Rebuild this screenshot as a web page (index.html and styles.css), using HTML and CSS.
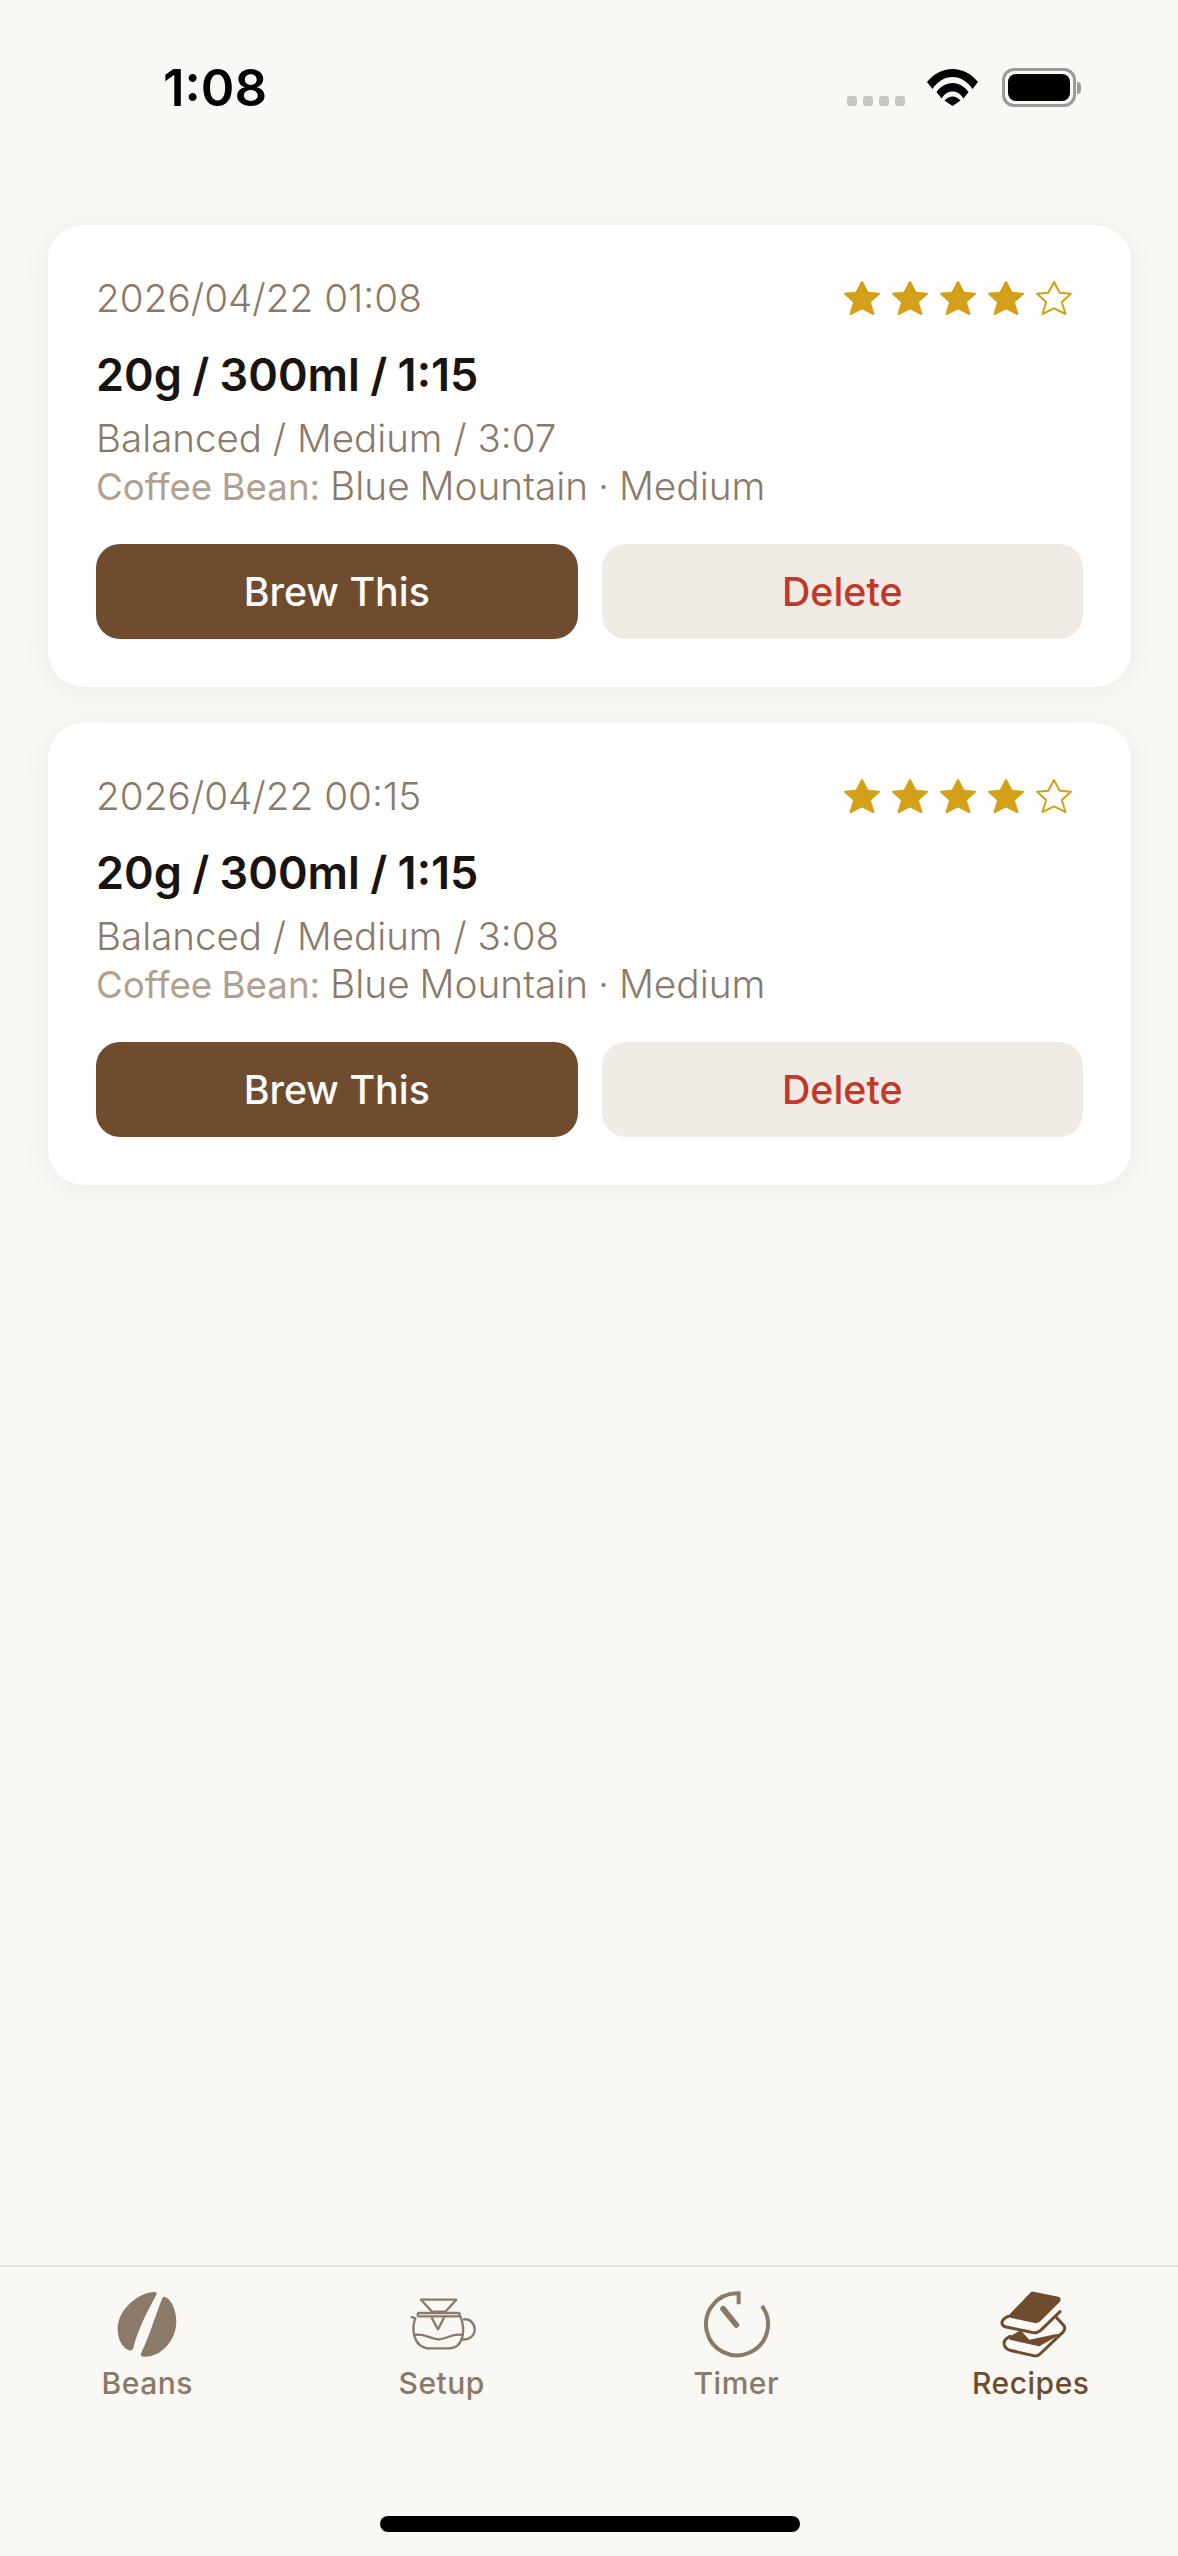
FILE: index.html
```html
<!DOCTYPE html>
<html lang="en">
<head>
<meta charset="utf-8">
<title>Recipes</title>
<link rel="stylesheet" href="styles.css">
</head>
<body>
<div class="page">
  <header class="status">
    <span class="time">1:08</span>
    <div class="status-icons">
      <div class="dots"><i></i><i></i><i></i><i></i></div>
      <svg class="wifi" viewBox="0 0 51 37"><path d="M0 13C6.500 5 15.500 0 25.500 0S44.500 5 51 13L45.500 20C40.500 12.500 33.500 8 25.500 8S10.500 12.500 5.500 20Z"/><path d="M9.500 23C13.500 17.500 19 14 25.500 14S37.500 17.500 41.500 23L36.500 29.500C33.500 25 30 22.500 25.500 22.500S17.500 25 14.500 29.500Z"/><path d="M17.500 31.500C20 29 23 27.500 25.500 27.500S31 29 33.500 31.500L25.500 37Z"/></svg>
      <div class="battery"><div class="battery-body"><div class="battery-fill"></div></div><div class="battery-nub"></div></div>
    </div>
  </header>
  <main class="list">
    <article class="card">
      <div class="card-head">
        <span class="date">2026/04/22 01:08</span>
        <div class="stars">
          <svg class="star" viewBox="0 0 36 34"><path d="M18 1L23.700 11.800 35 12.800 25.800 21 29.500 33 18 27.300 6.500 33 10.200 21 1 12.800 12.300 11.800Z"/></svg>
          <svg class="star" viewBox="0 0 36 34"><path d="M18 1L23.700 11.800 35 12.800 25.800 21 29.500 33 18 27.300 6.500 33 10.200 21 1 12.800 12.300 11.800Z"/></svg>
          <svg class="star" viewBox="0 0 36 34"><path d="M18 1L23.700 11.800 35 12.800 25.800 21 29.500 33 18 27.300 6.500 33 10.200 21 1 12.800 12.300 11.800Z"/></svg>
          <svg class="star" viewBox="0 0 36 34"><path d="M18 1L23.700 11.800 35 12.800 25.800 21 29.500 33 18 27.300 6.500 33 10.200 21 1 12.800 12.300 11.800Z"/></svg>
          <svg class="star star-empty" viewBox="0 0 36 34"><path d="M18 1L23.700 11.800 35 12.800 25.800 21 29.500 33 18 27.300 6.500 33 10.200 21 1 12.800 12.300 11.800Z"/></svg>
        </div>
      </div>
      <h2 class="title">20g / 300ml / 1:15</h2>
      <p class="sub">Balanced / Medium / 3:07</p>
      <p class="bean"><span class="bean-label">Coffee Bean:</span> Blue Mountain · Medium</p>
      <div class="actions">
        <button class="btn btn-primary">Brew This</button>
        <button class="btn btn-delete">Delete</button>
      </div>
    </article>
    <article class="card">
      <div class="card-head">
        <span class="date">2026/04/22 00:15</span>
        <div class="stars">
          <svg class="star" viewBox="0 0 36 34"><path d="M18 1L23.700 11.800 35 12.800 25.800 21 29.500 33 18 27.300 6.500 33 10.200 21 1 12.800 12.300 11.800Z"/></svg>
          <svg class="star" viewBox="0 0 36 34"><path d="M18 1L23.700 11.800 35 12.800 25.800 21 29.500 33 18 27.300 6.500 33 10.200 21 1 12.800 12.300 11.800Z"/></svg>
          <svg class="star" viewBox="0 0 36 34"><path d="M18 1L23.700 11.800 35 12.800 25.800 21 29.500 33 18 27.300 6.500 33 10.200 21 1 12.800 12.300 11.800Z"/></svg>
          <svg class="star" viewBox="0 0 36 34"><path d="M18 1L23.700 11.800 35 12.800 25.800 21 29.500 33 18 27.300 6.500 33 10.200 21 1 12.800 12.300 11.800Z"/></svg>
          <svg class="star star-empty" viewBox="0 0 36 34"><path d="M18 1L23.700 11.800 35 12.800 25.800 21 29.500 33 18 27.300 6.500 33 10.200 21 1 12.800 12.300 11.800Z"/></svg>
        </div>
      </div>
      <h2 class="title">20g / 300ml / 1:15</h2>
      <p class="sub">Balanced / Medium / 3:08</p>
      <p class="bean"><span class="bean-label">Coffee Bean:</span> Blue Mountain · Medium</p>
      <div class="actions">
        <button class="btn btn-primary">Brew This</button>
        <button class="btn btn-delete">Delete</button>
      </div>
    </article>
  </main>
  <nav class="tabbar">
    <div class="tab">
      <svg class="tab-icon" viewBox="0 0 198 198"><path class="solid" d="M122 3C80 3 11 50 11 115C11 150 30 175 46 178C52 180 56 176 58 170C70 120 100 60 127 12C130 6 127 3 122 3Z"/><path class="solid" d="M152 18C172 22 187 60 187 90C187 150 140 198 92 197C82 197 78 192 82 185C105 140 125 70 145 22C147 17 149 16 152 18Z"/></svg>
      <span class="tab-label">Beans</span>
    </div>
    <div class="tab">
      <svg class="tab-icon" viewBox="0 0 198 198"><g class="line"><path d="M36 26H142L109 62H69Z"/><rect x="26" y="66" width="126" height="10" rx="4"/><path d="M69 82L87 115L104 82"/><path d="M8 78L19 82C8 110 10 172 64 172H119C165 172 170 115 154 76"/><path d="M164 85C185 82 197 100 197 115C197 135 180 148 160 145"/><path d="M16 132C44 125 64 145 89 145C114 145 129 125 161 132"/></g></svg>
      <span class="tab-label">Setup</span>
    </div>
    <div class="tab">
      <svg class="tab-icon" viewBox="0 0 198 198"><path class="timer-ring" d="M177 45A93 93 0 1 1 100 7H107V40"/><path class="timer-hand" d="M60 53L100 102"/></svg>
      <span class="tab-label">Timer</span>
    </div>
    <div class="tab tab-active">
      <svg class="tab-icon" viewBox="0 0 198 198"><path class="solid-active" d="M99 3Q103 1 107 2L181 17Q193 21 185 33L127 91Q119 98 110 96L27 78Z"/><path class="line-active" d="M30 76Q10 85 12 97Q14 106 25 108L100 124Q116 128 128 118L186 62"/><path class="line-active" d="M176 80L198 104Q204 114 194 124L126 189Q118 197 106 194L36 178Q18 172 18 156Q19 144 36 136"/><path class="solid-active" d="M36 136L68 118L94 146L172 130L190 128L124 166L34 146Z"/></svg>
      <span class="tab-label">Recipes</span>
    </div>
    <div class="home-indicator"></div>
  </nav>
</div>
</body>
</html>
```
FILE: styles.css
```css
* { box-sizing: border-box; }
html, body { margin: 0; padding: 0; }
body { background: #f9f8f4; font-family: Inter, "Noto Sans", sans-serif; }
.page { display: flex; flex-direction: column; height: 2556px; width: 1178px; }

.status { flex: 0 0 180px; display: flex; justify-content: space-between; align-items: flex-start; padding: 57px 97px 0 163px; }
.time { font-size: 51px; line-height: 61px; font-weight: 600; color: #000; }
.status-icons { display: flex; align-items: flex-end; margin-top: 11px; height: 39px; }
.dots { display: flex; gap: 6px; margin-right: 22px; margin-bottom: 1px; }
.dots i { display: block; width: 10px; height: 10px; border-radius: 3px; background: #c8c6c2; }
.wifi { width: 51px; height: 37px; fill: #000; margin-right: 24px; margin-bottom: 1px; }
.battery { display: flex; align-items: center; }
.battery-body { width: 74px; height: 39px; border: 3px solid #9a9a98; border-radius: 12px; padding: 3px; }
.battery-fill { width: 100%; height: 100%; background: #000; border-radius: 8px; }
.battery-nub { width: 4px; height: 12px; background: #9a9a98; border-radius: 0 6px 6px 0; margin-left: 1px; }

.list { flex: 1; display: flex; flex-direction: column; gap: 36px; padding: 45px 47px 0 48px; }
.card { background: #fff; border-radius: 36px; padding: 51px 48px 48px; box-shadow: 0 4px 30px rgba(60, 40, 20, 0.06); }
.card-head { display: flex; justify-content: space-between; align-items: center; height: 44px; margin-bottom: 29px; }
.date { font-size: 38.7px; line-height: 44px; font-weight: 300; color: #8b7a69; }
.stars { display: flex; gap: 12px; margin-right: 11px; }
.star { width: 36px; height: 34px; fill: #d4a017; stroke: #d4a017; stroke-width: 2; stroke-linejoin: round; }
.star-empty { fill: none; }
.title { margin: 0 0 14px; font-size: 45px; line-height: 52px; font-weight: 600; word-spacing: -1px; color: #1a1410; }
.sub, .bean { margin: 0; font-size: 38.5px; line-height: 47px; font-weight: 300; color: #8b7a69; }
.bean { font-size: 38.8px; word-spacing: -1px; }
.bean-label { font-size: 36.7px; line-height: 1; font-weight: 400; color: #b0a090; }
.actions { display: flex; gap: 24px; margin-top: 35px; }
.btn { flex: 1; height: 95px; border: 0; border-radius: 24px; font-family: inherit; font-size: 39.3px; font-weight: 550; }
.btn-primary { background: #6e4c2d; color: #fff; }
.btn-delete { background: #f0ebe5; color: #c0392b; }

.tabbar { position: relative; flex: 0 0 291px; display: grid; grid-template-columns: repeat(4, 1fr); align-items: start; padding-top: 24px; border-top: 2px solid #e9e3dc; }
.tab { display: flex; flex-direction: column; align-items: center; color: #8b7a69; }
.tab-active { color: #6e4c2d; }
.tab-icon { width: 66px; height: 66px; overflow: visible; }
.tab-label { margin-top: 8px; font-size: 30px; line-height: 36px; font-weight: 550; letter-spacing: 0.5px; }
.solid { fill: #8b7a69; }
.solid-active { fill: #6e4c2d; }
.line { fill: none; stroke: #8b7a69; stroke-width: 7; stroke-linejoin: round; stroke-linecap: round; }
.line-active { fill: none; stroke: #6e4c2d; stroke-width: 9; stroke-linejoin: round; stroke-linecap: round; }
.timer-ring { fill: none; stroke: #8b7a69; stroke-width: 12; }
.timer-hand { fill: none; stroke: #8b7a69; stroke-width: 17; stroke-linecap: round; }
.home-indicator { position: absolute; left: 380px; top: 249px; width: 420px; height: 16px; border-radius: 8px; background: #000; }
```
